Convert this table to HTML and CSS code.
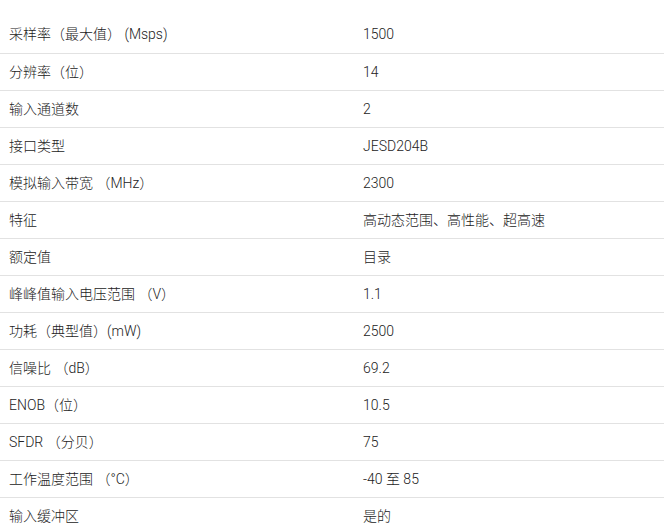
FILE: index.html
```html
<!DOCTYPE html>
<html lang="zh-CN">
<head>
<meta charset="utf-8">
<title>参数</title>
<link rel="stylesheet" href="styles.css">
</head>
<body>
<table class="spec-table">
  <tbody>
    <tr><td class="name">采样率（最大值） (Msps)</td><td class="value">1500</td></tr>
    <tr><td class="name">分辨率（位）</td><td class="value">14</td></tr>
    <tr><td class="name">输入通道数</td><td class="value">2</td></tr>
    <tr><td class="name">接口类型</td><td class="value">JESD204B</td></tr>
    <tr><td class="name">模拟输入带宽 （MHz）</td><td class="value">2300</td></tr>
    <tr><td class="name">特征</td><td class="value">高动态范围、高性能、超高速</td></tr>
    <tr><td class="name">额定值</td><td class="value">目录</td></tr>
    <tr><td class="name">峰峰值输入电压范围 （V）</td><td class="value">1.1</td></tr>
    <tr><td class="name">功耗（典型值）(mW)</td><td class="value">2500</td></tr>
    <tr><td class="name">信噪比 （dB）</td><td class="value">69.2</td></tr>
    <tr><td class="name">ENOB（位）</td><td class="value">10.5</td></tr>
    <tr><td class="name">SFDR （分贝）</td><td class="value">75</td></tr>
    <tr><td class="name">工作温度范围 （°C）</td><td class="value">-40 至 85</td></tr>
    <tr><td class="name">输入缓冲区</td><td class="value">是的</td></tr>
  </tbody>
</table>
</body>
</html>
```
FILE: styles.css
```css
html, body {
  margin: 0;
  padding: 0;
  background: #ffffff;
}
body {
  padding-top: 16px;
  font-family: Roboto, "Noto Sans CJK SC", sans-serif;
  font-size: 14px;
  font-weight: 300;
  color: #222222;
}
.spec-table {
  width: 664px;
  border-collapse: collapse;
  table-layout: fixed;
}
.spec-table tr {
  height: 37px;
}
.spec-table tr + tr {
  border-top: 1px solid #e2e2e2;
}
.spec-table td {
  padding: 0 0 0 9px;
  vertical-align: middle;
  line-height: 20px;
}
.spec-table td.name {
  width: 345px;
}
```
